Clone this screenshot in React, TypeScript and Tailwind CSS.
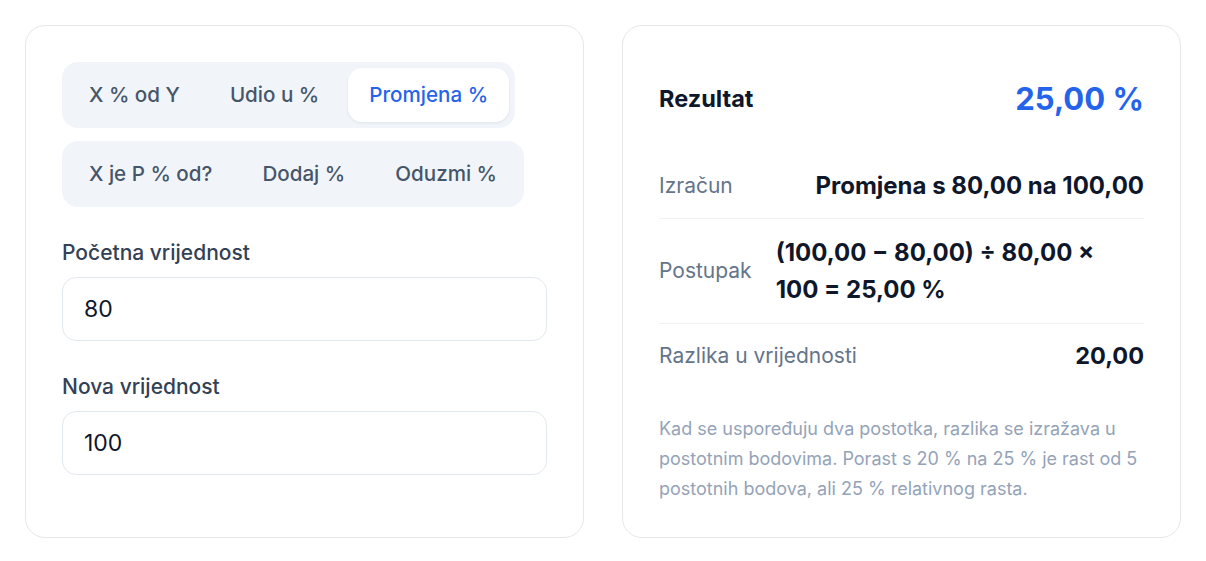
import React from "react";

const font = { fontFamily: "Inter, 'Noto Sans', sans-serif" };

function Tab({ label, active }: { label: string; active?: boolean }) {
  return (
    <button
      className={
        active
          ? "h-[54px] px-[21px] rounded-[14px] bg-white text-[20.6px] font-medium text-[#2563eb] shadow-[0_1px_3px_rgba(15,23,42,0.08)]"
          : "h-[54px] px-[21px] rounded-[14px] text-[20.6px] font-medium text-[#475569]"
      }
    >
      {label}
    </button>
  );
}

function Field({ label, value }: { label: string; value: string }) {
  return (
    <div className="flex flex-col">
      <label className="text-[21px] leading-[27px] font-medium text-[#334155] mb-[11px]">{label}</label>
      <input
        readOnly
        value={value}
        className="h-[64px] w-full rounded-[14px] border border-[#e2e8f0] bg-white px-[21px] text-[23px] text-[#0f172a] outline-none"
      />
    </div>
  );
}

export default function App() {
  return (
    <div style={font} className="min-h-[561px] bg-white p-[25px]">
      <div className="grid grid-cols-2 gap-[38px]">
        <div className="rounded-[20px] border border-[#e5e7eb] bg-white p-9">
          <div className="flex flex-col items-start gap-[13px]">
            <div className="flex gap-2 rounded-[16px] bg-[#f1f5f9] p-[6px]">
              <Tab label="X % od Y" />
              <Tab label="Udio u %" />
              <Tab label="Promjena %" active />
            </div>
            <div className="flex gap-2 rounded-[16px] bg-[#f1f5f9] p-[6px]">
              <Tab label="X je P % od?" />
              <Tab label="Dodaj %" />
              <Tab label="Oduzmi %" />
            </div>
          </div>
          <div className="mt-8 flex flex-col gap-8">
            <Field label="Početna vrijednost" value="80" />
            <Field label="Nova vrijednost" value="100" />
          </div>
        </div>

        <div className="rounded-[20px] border border-[#e5e7eb] bg-white px-9 pt-9 pb-[33px]">
          <div className="flex items-center justify-between py-[17px]">
            <span className="text-[23.5px] leading-[40px] font-bold text-[#0f172a]">Rezultat</span>
            <span className="text-[31px] leading-[40px] font-bold text-[#2563eb]">25,00 %</span>
          </div>
          <div className="mt-[18px]">
            <div className="flex items-center justify-between gap-6 border-b border-[#eef2f6] py-[15px]">
              <span className="text-[21px] leading-[34px] text-[#64748b]">Izračun</span>
              <span className="text-[24px] leading-[34px] font-bold text-[#0f172a] text-right">
                Promjena s 80,00 na 100,00
              </span>
            </div>
            <div className="flex items-center justify-between gap-6 border-b border-[#eef2f6] py-[15px]">
              <span className="shrink-0 text-[21px] leading-[34px] text-[#64748b]">Postupak</span>
              <span className="flex-1 text-[24px] leading-[37px] font-bold text-[#0f172a] text-left">
                (100,00 − 80,00) ÷ 80,00 ×<br />100 = 25,00 %
              </span>
            </div>
            <div className="flex items-center justify-between gap-6 py-[15px]">
              <span className="text-[21px] leading-[34px] text-[#64748b]">Razlika u vrijednosti</span>
              <span className="text-[23.5px] leading-[34px] font-bold text-[#0f172a] text-right">20,00</span>
            </div>
          </div>
          <p className="mt-[26px] text-[18px] leading-[30px] text-[#94a3b8]">
            Kad se uspoređuju dva postotka, razlika se izražava u postotnim bodovima. Porast s 20 % na 25 % je rast od 5 postotnih bodova, ali 25 % relativnog rasta.
          </p>
        </div>
      </div>
    </div>
  );
}
